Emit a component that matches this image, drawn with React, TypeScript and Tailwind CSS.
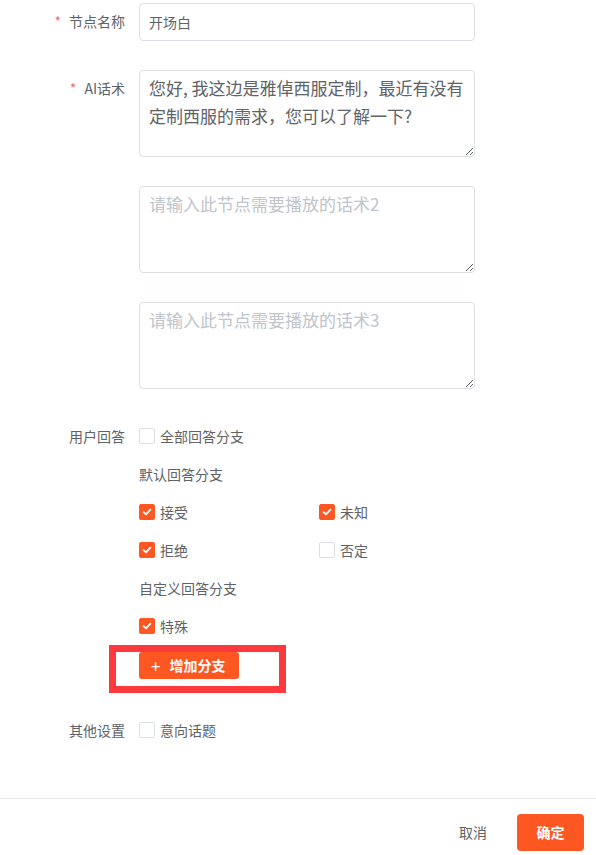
import { useState } from 'react'

const font = { fontFamily: '"Noto Sans CJK SC", "Noto Sans", sans-serif' }

function Check({ checked, label, onToggle }: { checked: boolean; label: string; onToggle: () => void }) {
  return (
    <label className="flex items-center h-[38px] cursor-pointer select-none" onClick={onToggle}>
      <span
        className={
          'flex items-center justify-center w-[16px] h-[16px] rounded-[2px] border ' +
          (checked ? 'bg-[#fe5722] border-[#fe5722]' : 'bg-white border-[#dcdfe6]')
        }
      >
        {checked && (
          <svg width="10" height="10" viewBox="0 0 10 10">
            <path d="M1.6 5.2 L4 7.4 L8.4 2.6" fill="none" stroke="#fff" strokeWidth="1.8" strokeLinecap="round" strokeLinejoin="round" />
          </svg>
        )}
      </span>
      <span className="ml-[5px] text-[14px] text-[#606266]">{label}</span>
    </label>
  )
}

function Label({ text, required }: { text: string; required?: boolean }) {
  return (
    <div className="w-[139px] shrink-0 pr-[14px] text-right text-[14px] leading-[36px] text-[#606266]">
      {required && <span className="text-[#f56c6c] mr-[8px]">*</span>}
      {text}
    </div>
  )
}

function Area({ value, placeholder }: { value?: string; placeholder?: string }) {
  return (
    <textarea
      defaultValue={value}
      placeholder={placeholder}
      className="block w-[336px] h-[87px] rounded-[4px] border border-[#dcdfe6] px-[9px] py-[3px] text-[17px] leading-[28px] text-[#606266] placeholder:text-[#c0c4cc] outline-none resize-y"
    />
  )
}

export default function App() {
  const [checks, setChecks] = useState<Record<string, boolean>>({
    all: false,
    accept: true,
    unknown: true,
    reject: true,
    deny: false,
    special: true,
    topic: false,
  })
  const toggle = (k: string) => setChecks((c) => ({ ...c, [k]: !c[k] }))

  return (
    <div className="w-[596px] h-[855px] bg-white flex flex-col" style={font}>
      <div className="flex-1 pt-[3px]">
        <div className="flex">
          <Label text="节点名称" required />
          <input
            defaultValue="开场白"
            className="w-[336px] h-[38px] rounded-[4px] border border-[#dcdfe6] px-[9px] text-[14px] text-[#606266] outline-none"
          />
        </div>

        <div className="flex mt-[29px]">
          <Label text="AI话术" required />
          <div className="flex flex-col gap-[29px]">
            <Area value="您好, 我这边是雅倬西服定制，最近有没有定制西服的需求，您可以了解一下?" />
            <Area placeholder="请输入此节点需要播放的话术2" />
            <Area placeholder="请输入此节点需要播放的话术3" />
          </div>
        </div>

        <div className="flex mt-[28px]">
          <div className="w-[139px] shrink-0 pr-[14px] text-right text-[14px] leading-[38px] text-[#606266]">用户回答</div>
          <div className="flex flex-col">
            <Check checked={checks.all} label="全部回答分支" onToggle={() => toggle('all')} />
            <div className="h-[38px] leading-[38px] text-[14px] text-[#606266]">默认回答分支</div>
            <div className="grid grid-cols-[180px_180px]">
              <Check checked={checks.accept} label="接受" onToggle={() => toggle('accept')} />
              <Check checked={checks.unknown} label="未知" onToggle={() => toggle('unknown')} />
              <Check checked={checks.reject} label="拒绝" onToggle={() => toggle('reject')} />
              <Check checked={checks.deny} label="否定" onToggle={() => toggle('deny')} />
            </div>
            <div className="h-[38px] leading-[38px] text-[14px] text-[#606266]">自定义回答分支</div>
            <Check checked={checks.special} label="特殊" onToggle={() => toggle('special')} />
            <div className="relative mt-[7px] self-start">
              <button className="flex items-center h-[27px] w-[100px] pl-[12px] rounded-[3px] bg-[#fe5722] text-white text-[14px] font-bold">
                <span className="text-[17px] font-normal leading-none mr-[9px]">+</span>
                增加分支
              </button>
              <div className="absolute left-[-30px] top-[-7px] w-[177px] h-[48px] border-[7px] border-[#fc3a3d] pointer-events-none" />
            </div>
          </div>
        </div>

        <div className="flex mt-[32px]">
          <div className="w-[139px] shrink-0 pr-[14px] text-right text-[14px] leading-[38px] text-[#606266]">其他设置</div>
          <Check checked={checks.topic} label="意向话题" onToggle={() => toggle('topic')} />
        </div>
      </div>

      <div className="border-t border-[#e8e8e8] h-[57px] flex items-start justify-end pt-[15px] pr-[12px]">
        <button className="h-[37px] px-[15px] text-[14px] text-[#606266] mr-[15px]">取消</button>
        <button className="h-[37px] w-[67px] rounded-[4px] bg-[#fe5722] text-white text-[14px] font-bold">确定</button>
      </div>
    </div>
  )
}
